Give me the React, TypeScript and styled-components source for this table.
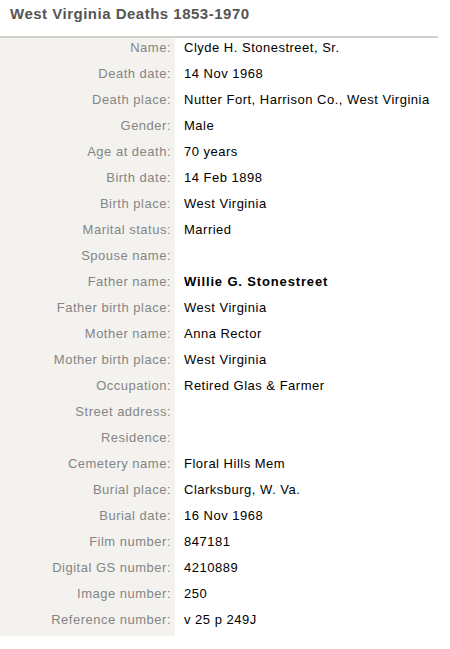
import React from "react";
import styled, { createGlobalStyle } from "styled-components";

const Global = createGlobalStyle`
  html, body { margin: 0; padding: 0; background: #fff; }
  body { font-family: "Liberation Sans", Arial, sans-serif; }
`;

const Page = styled.div`
  width: 450px;
`;

const Title = styled.h1`
  margin: 0;
  padding: 5px 0 0 10px;
  width: 438px;
  height: 38px;
  box-sizing: border-box;
  font-size: 15px;
  letter-spacing: 0.5px;
  font-weight: bold;
  color: #555;
  line-height: 18px;
  border-bottom: 2px solid #cfcfcb;
`;

const Table = styled.div`
  display: grid;
  grid-template-columns: 175px 1fr;
  width: 438px;
`;

const Label = styled.div`
  background: #f3f2ee;
  color: #858585;
  font-size: 13px;
  letter-spacing: 0.5px;
  text-align: right;
  padding-right: 4px;
  height: 26px;
  line-height: 20px;
`;

const Value = styled.div<{ $bold?: boolean }>`
  color: #000;
  font-size: 13px;
  letter-spacing: ${(p) => (p.$bold ? "0.85px" : "0.5px")};
  font-weight: ${(p) => (p.$bold ? "bold" : "normal")};
  padding-left: 9px;
  height: 26px;
  line-height: 20px;
`;

const rows: [string, string, boolean?][] = [
  ["Name:", "Clyde H. Stonestreet, Sr."],
  ["Death date:", "14 Nov 1968"],
  ["Death place:", "Nutter Fort, Harrison Co., West Virginia"],
  ["Gender:", "Male"],
  ["Age at death:", "70 years"],
  ["Birth date:", "14 Feb 1898"],
  ["Birth place:", "West Virginia"],
  ["Marital status:", "Married"],
  ["Spouse name:", ""],
  ["Father name:", "Willie G. Stonestreet", true],
  ["Father birth place:", "West Virginia"],
  ["Mother name:", "Anna Rector"],
  ["Mother birth place:", "West Virginia"],
  ["Occupation:", "Retired Glas & Farmer"],
  ["Street address:", ""],
  ["Residence:", ""],
  ["Cemetery name:", "Floral Hills Mem"],
  ["Burial place:", "Clarksburg, W. Va."],
  ["Burial date:", "16 Nov 1968"],
  ["Film number:", "847181"],
  ["Digital GS number:", "4210889"],
  ["Image number:", "250"],
  ["Reference number:", "v 25 p 249J"],
];

export default function App() {
  return (
    <Page>
      <Global />
      <Title>West Virginia Deaths 1853-1970</Title>
      <Table>
        {rows.map(([l, v, b]) => (
          <React.Fragment key={l}>
            <Label>{l}</Label>
            <Value $bold={b}>{v}</Value>
          </React.Fragment>
        ))}
      </Table>
    </Page>
  );
}
